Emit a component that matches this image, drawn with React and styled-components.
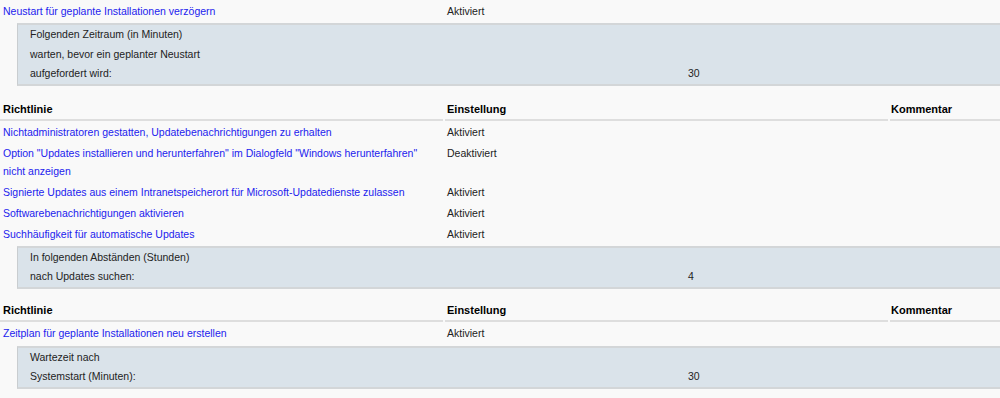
import React from "react";
import styled, { createGlobalStyle } from "styled-components";

const Global = createGlobalStyle`
  html, body { margin: 0; padding: 0; background: #f9f9f9; }
  body {
    font-family: "Liberation Sans", Arial, sans-serif;
    font-size: 10.5px;
    color: #222;
    overflow: hidden;
  }
`;

const Page = styled.div`
  width: 1000px;
  display: flex;
  flex-direction: column;
`;

const Section = styled.div`
  display: flex;
  flex-direction: column;
  margin-top: ${(p) => p.$top || 0}px;
`;

const Grid = styled.div`
  display: grid;
  grid-template-columns: 443px 443px 1fr;
  column-gap: 2px;
`;

const HeadCell = styled.div`
  font-size: 11px;
  font-weight: bold;
  color: #000;
  padding-left: ${(p) => p.$pad}px;
  height: 19px;
  line-height: 19px;
  border-bottom: 2px solid #dedede;
`;

const Row = styled(Grid)`
  padding: 2px 0 1px;
  line-height: 18px;
`;

const PolicyLink = styled.a`
  color: #2222ee;
  text-decoration: none;
  padding-left: 3px;
  padding-right: 10px;
`;

const Setting = styled.span`
  color: #222;
  padding-left: 2px;
`;

const DetailBox = styled.div`
  margin: ${(p) => p.$gap}px 0 0 17px;
  background: #dae3ea;
  border-top: 2px solid #d3d6d8;
  border-bottom: 2px solid #d3d6d8;
  border-left: 1px solid #c9cdd0;
  display: grid;
  grid-template-columns: 658px 1fr;
  padding-left: 12px;
  line-height: 19.5px;
  color: #222;
`;

const DetailLabel = styled.div`
  display: flex;
  flex-direction: column;
`;

const DetailValue = styled.div`
  align-self: end;
`;

const Header = () => (
  <Grid>
    <HeadCell $pad={3}>Richtlinie</HeadCell>
    <HeadCell $pad={2}>Einstellung</HeadCell>
    <HeadCell $pad={1}>Kommentar</HeadCell>
  </Grid>
);

const Policy = ({ name, setting }) => (
  <Row>
    <PolicyLink href="#">{name}</PolicyLink>
    <Setting>{setting}</Setting>
    <span />
  </Row>
);

const Detail = ({ lines, value, gap = 3 }) => (
  <DetailBox $gap={gap}>
    <DetailLabel>
      {lines.map((l) => (
        <span key={l}>{l}</span>
      ))}
    </DetailLabel>
    <DetailValue>{value}</DetailValue>
  </DetailBox>
);

export default function App() {
  return (
    <Page>
      <Global />
      <Section>
        <Policy name="Neustart für geplante Installationen verzögern" setting="Aktiviert" />
        <Detail
          gap={2}
          lines={[
            "Folgenden Zeitraum (in Minuten)",
            "warten, bevor ein geplanter Neustart",
            "aufgefordert wird:",
          ]}
          value="30"
        />
      </Section>
      <Section $top={14}>
        <Header />
        <Policy
          name="Nichtadministratoren gestatten, Updatebenachrichtigungen zu erhalten"
          setting="Aktiviert"
        />
        <Policy
          name={'Option "Updates installieren und herunterfahren" im Dialogfeld "Windows herunterfahren" nicht anzeigen'}
          setting="Deaktiviert"
        />
        <Policy
          name="Signierte Updates aus einem Intranetspeicherort für Microsoft-Updatedienste zulassen"
          setting="Aktiviert"
        />
        <Policy name="Softwarebenachrichtigungen aktivieren" setting="Aktiviert" />
        <Policy name="Suchhäufigkeit für automatische Updates" setting="Aktiviert" />
        <Detail gap={2} lines={["In folgenden Abständen (Stunden)", "nach Updates suchen:"]} value="4" />
      </Section>
      <Section $top={12}>
        <Header />
        <Policy name="Zeitplan für geplante Installationen neu erstellen" setting="Aktiviert" />
        <Detail gap={3} lines={["Wartezeit nach", "Systemstart (Minuten):"]} value="30" />
      </Section>
    </Page>
  );
}
